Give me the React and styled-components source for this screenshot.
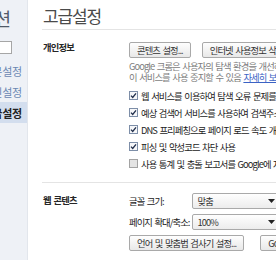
import { styled, createGlobalStyle } from "styled-components";

const KR = `"Noto Sans CJK KR", "Noto Sans", sans-serif`;

const GlobalStyle = createGlobalStyle`
  html, body {
    margin: 0;
    padding: 0;
    background: #fff;
    overflow: hidden;
  }
  body {
    font-family: ${KR};
    color: #262626;
  }
`;

const Page = styled.div`
  display: flex;
  width: 276px;
  height: 260px;
  overflow: hidden;
`;

const Sidebar = styled.div`
  width: 27px;
  flex-shrink: 0;
  background: #eef1f6;
  border-right: 1px solid #e2e6ec;
  overflow: hidden;
`;

const SidebarInner = styled.div`
  width: 120px;
  margin-left: -93px;
  display: flex;
  flex-direction: column;
  align-items: flex-end;
`;

const SideTitle = styled.div`
  font-size: 18px;
  line-height: 20px;
  padding: 8px 17px 0 0;
  color: #505a68;
  letter-spacing: -1px;
  height: 33px;
  box-sizing: border-box;
`;

const SearchBox = styled.div`
  width: 60px;
  height: 13px;
  margin: 8px 15px 6px 0;
  background: #fff;
  border: 1px solid #a6a6a6;
  box-sizing: border-box;
`;

const NavItem = styled.div`
  width: 100%;
  height: 21px;
  display: flex;
  align-items: center;
  justify-content: flex-end;
  padding-right: 5px;
  box-sizing: border-box;
  font-size: 11px;
  letter-spacing: -0.2px;
  background: ${(p) => (p.$active ? "#d3deee" : "transparent")};
  color: ${(p) => (p.$active ? "#222" : "#6a86b2")};
  font-weight: ${(p) => (p.$active ? 700 : 400)};
`;

const Main = styled.div`
  flex: 1;
  padding-left: 14px;
  overflow: hidden;
  min-width: 0;
`;

const Heading = styled.h1`
  margin: 0;
  padding: 7px 0 4px 1px;
  font-size: 17px;
  line-height: 18px;
  font-weight: 400;
  letter-spacing: -1.1px;
  color: #4a4a4a;
  border-bottom: 1px solid #e4e4e4;
`;

const Section = styled.section`
  display: flex;
  padding: ${(p) => p.$pad};
  border-bottom: ${(p) => (p.$line ? "1px solid #e4e4e4" : "none")};
`;

const SectionLabel = styled.div`
  width: 86px;
  flex-shrink: 0;
  padding-left: 1px;
  margin-top: ${(p) => p.$top || "0"};
  font-size: 9.3px;
  line-height: 11px;
  font-weight: 700;
  letter-spacing: -0.8px;
  word-spacing: 1.5px;
  color: #262626;
`;

const Body = styled.div`
  display: flex;
  flex-direction: column;
  white-space: nowrap;
  font-size: 9.3px;
  letter-spacing: -0.9px;
  word-spacing: 1.3px;
`;

const ButtonRow = styled.div`
  display: flex;
  gap: ${(p) => p.$gap};
`;

const Button = styled.div`
  height: 16px;
  padding: 0 7px;
  flex-shrink: 0;
  display: flex;
  align-items: center;
  box-sizing: border-box;
  border: 1px solid #a9a9a9;
  border-radius: 2px;
  background: linear-gradient(#fefefe, #e8e8e8);
  color: #333;
`;

const Note = styled.p`
  margin: 3px 0 4px;
  line-height: 11px;
  color: #7d7d7d;
`;

const Link = styled.a`
  color: #3b62c4;
  text-decoration: underline;
`;

const CheckRow = styled.label`
  height: 17px;
  display: flex;
  align-items: center;
  gap: 3px;
  color: #222;
`;

const FieldGrid = styled.div`
  display: grid;
  grid-template-columns: max-content 88px;
  justify-content: start;
  column-gap: 3px;
  row-gap: 5px;
  align-items: center;
  margin-bottom: 5px;
`;

const FieldLabel = styled.span`
  color: #222;
`;

const SelectBox = styled.div`
  height: 16px;
  display: flex;
  align-items: center;
  justify-content: space-between;
  padding: 0 4px;
  box-sizing: border-box;
  border: 1px solid #a9a9a9;
  border-radius: 2px;
  background: linear-gradient(#fefefe, #ececec);
  color: #333;
`;

const Check = ({ on }) => (
  <svg width="9" height="9" viewBox="0 0 9 9">
    <rect
      x="0.5"
      y="0.5"
      width="8"
      height="8"
      fill={on ? "#f6f7f9" : "#e4e4e4"}
      stroke={on ? "#7d8ea8" : "#a3a3a3"}
    />
    {on && (
      <path
        d="M2 4.6 L3.7 6.4 L7 2.3"
        fill="none"
        stroke="#1f2d4a"
        strokeWidth="1.3"
      />
    )}
  </svg>
);

const Arrow = () => (
  <svg width="7" height="4" viewBox="0 0 7 4">
    <path d="M0 0 H7 L3.5 4 Z" fill="#222" />
  </svg>
);

const checks = [
  { on: true, text: "웹 서비스를 이용하여 탐색 오류 문제를 해결" },
  { on: true, text: "예상 검색어 서비스를 사용하여 검색주소창에" },
  { on: true, text: "DNS 프리페칭으로 페이지 로드 속도 개선" },
  { on: true, text: "피싱 및 악성코드 차단 사용" },
  { on: false, text: "사용 통계 및 충돌 보고서를 Google에 자동으로" },
];

export default function App() {
  return (
    <>
      <GlobalStyle />
      <Page>
        <Sidebar>
          <SidebarInner>
            <SideTitle>옵션</SideTitle>
            <SearchBox />
            <NavItem>기본설정</NavItem>
            <NavItem>개인설정</NavItem>
            <NavItem $active>고급설정</NavItem>
          </SidebarInner>
        </Sidebar>
        <Main>
          <Heading>고급설정</Heading>
          <Section $pad="12px 0 10px" $line>
            <SectionLabel>개인정보</SectionLabel>
            <Body>
              <ButtonRow $gap="11px">
                <Button>콘텐츠 설정...</Button>
                <Button>인터넷 사용정보 삭제...</Button>
              </ButtonRow>
              <Note>
                Google 크롬은 사용자의 탐색 환경을 개선하기 위해 웹 서비스를
                <br />
                이 서비스를 사용 중지할 수 있음 <Link>자세히 보기</Link>
              </Note>
              {checks.map((c) => (
                <CheckRow key={c.text}>
                  <Check on={c.on} />
                  {c.text}
                </CheckRow>
              ))}
            </Body>
          </Section>
          <Section $pad="10px 0 0">
            <SectionLabel $top="2px">웹 콘텐츠</SectionLabel>
            <Body>
              <FieldGrid>
                <FieldLabel>글꼴 크기:</FieldLabel>
                <SelectBox>
                  맞춤
                  <Arrow />
                </SelectBox>
                <FieldLabel>페이지 확대/축소:</FieldLabel>
                <SelectBox>
                  100%
                  <Arrow />
                </SelectBox>
              </FieldGrid>
              <ButtonRow $gap="16px">
                <Button>언어 및 맞춤법 검사기 설정...</Button>
                <Button>Google 클라우드 프린트 설정...</Button>
              </ButtonRow>
            </Body>
          </Section>
        </Main>
      </Page>
    </>
  );
}
